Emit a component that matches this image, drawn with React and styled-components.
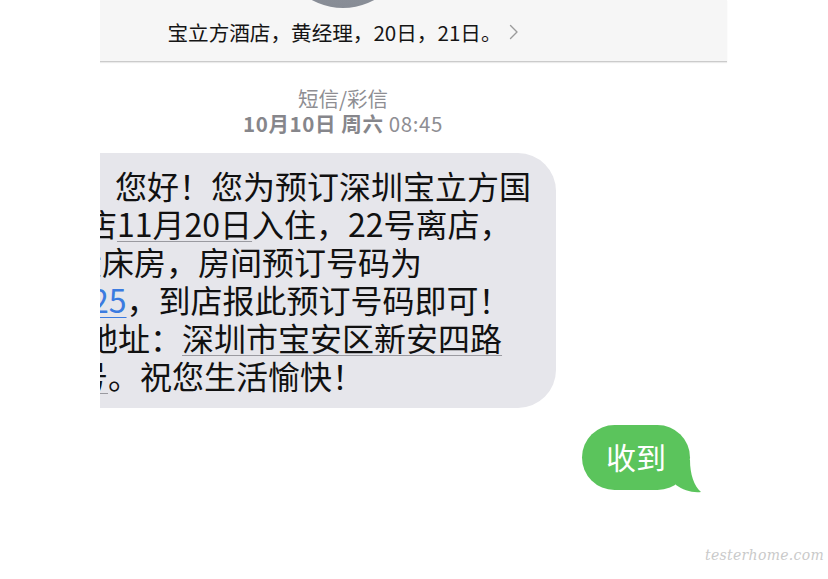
import React from "react";
import styled, { createGlobalStyle } from "styled-components";

const Global = createGlobalStyle`
  html, body { margin: 0; padding: 0; background: #ffffff; }
  body { font-family: "Noto Sans CJK SC", "Noto Sans", sans-serif; color: #111; }
`;

const Page = styled.div`
  position: relative;
  width: 828px;
  height: 579px;
  overflow: hidden;
  background: #fff;
`;

const Viewport = styled.div`
  margin-left: 100px;
  width: 728px;
  height: 579px;
  overflow: hidden;
`;

const Screen = styled.div`
  width: 768px;
  margin-left: -141px;
  display: flex;
  flex-direction: column;
`;

const Header = styled.header`
  height: 61px;
  background: #f6f6f6;
  border-bottom: 1px solid #cbcbcb;
  box-shadow: 0 1px 1px rgba(0, 0, 0, 0.08);
  display: flex;
  flex-direction: column;
  align-items: center;
`;

const Avatar = styled.div`
  width: 130px;
  height: 130px;
  margin-top: -122px;
  border-radius: 50%;
  background: linear-gradient(180deg, #a3a8b0 0%, #878c95 100%);
  flex-shrink: 0;
`;

const NameRow = styled.div`
  margin-top: 12px;
  display: flex;
  align-items: center;
  gap: 7px;
  font-size: 20.6px;
  line-height: 24px;
  color: #151515;
`;

const Meta = styled.div`
  margin-top: 24px;
  display: flex;
  flex-direction: column;
  align-items: center;
  color: #8e8e93;
  font-size: 20.5px;
  line-height: 25px;
`;

const Wide = styled.span`
  letter-spacing: 0.6px;
`;

const Strong = styled.span`
  font-weight: 600;
  color: #86868b;
`;

const Incoming = styled.div`
  margin-top: 17px;
  margin-left: 10px;
  width: 587px;
  box-sizing: border-box;
  padding: 13px 0 14px 131px;
  background: #e6e6eb;
  border-radius: 38px;
  font-size: 32px;
  line-height: 38px;
  color: #111;
  overflow: hidden;
`;

const Line = styled.div`
  white-space: nowrap;
  margin-left: ${(p) => p.$shift}px;
`;

const Detected = styled.span`
  text-decoration: underline;
  text-decoration-color: #9a9aa0;
  text-decoration-thickness: 1px;
  text-underline-offset: 4px;
`;

const Link = styled.span`
  color: #3b7be0;
  text-decoration: underline;
  text-decoration-thickness: 1px;
  text-underline-offset: 4px;
`;

const OutRow = styled.div`
  margin-top: 17px;
  display: flex;
  justify-content: flex-end;
  padding-right: 37px;
`;

const Outgoing = styled.div`
  position: relative;
  height: 65px;
  padding: 0 24px;
  border-radius: 33px;
  background: #5bc45c;
  color: #fff;
  font-size: 30px;
  line-height: 63px;
`;

const Tail = styled.svg`
  position: absolute;
  right: -12px;
  bottom: -4px;
  width: 32px;
  height: 34px;
`;

const Watermark = styled.div`
  position: absolute;
  right: 4px;
  bottom: 16px;
  font-family: "DejaVu Serif", serif;
  font-style: italic;
  font-weight: 300;
  font-size: 14px;
  letter-spacing: 0.3px;
  color: #cacaca;
`;

const Chevron = () => (
  <svg width="10" height="16" viewBox="0 0 10 16" fill="none">
    <path d="M1.5 1.5 L8 8 L1.5 14.5" stroke="#9b9b9b" strokeWidth="1.4" strokeLinecap="round" strokeLinejoin="round" />
  </svg>
);

export default function App() {
  return (
    <Page>
      <Global />
      <Viewport>
        <Screen>
          <Header>
            <Avatar />
            <NameRow>
              <span>宝立方酒店，黄经理，20日，21日。</span>
              <Chevron />
            </NameRow>
          </Header>
          <Meta>
            <span>短信/彩信</span>
            <Wide>
              <Strong>10月10日 周六</Strong> 08:45
            </Wide>
          </Meta>
          <Incoming>
            <Line $shift={-17}>，您好！您为预订深圳宝立方国</Line>
            <Line $shift={-15}>
              店<Detected>11月20日</Detected>入住，22号离店，
            </Line>
            <Line $shift={-30}>大床房，房间预订号码为</Line>
            <Line $shift={-9}>
              <Link>25</Link>，到店报此预订号码即可！
            </Line>
            <Line $shift={-14}>
              地址：<Detected>深圳市宝安区新安四路</Detected>
            </Line>
            <Line $shift={-24}>
              <Detected>号</Detected>。祝您生活愉快！
            </Line>
          </Incoming>
          <OutRow>
            <Outgoing>
              收到
              <Tail viewBox="0 0 32 34">
                <path d="M6 0 L20 0 C20 14 24 26 31 32 C22 33 13 30 6 25 Z" fill="#5bc45c" />
              </Tail>
            </Outgoing>
          </OutRow>
        </Screen>
      </Viewport>
      <Watermark>testerhome.com</Watermark>
    </Page>
  );
}
